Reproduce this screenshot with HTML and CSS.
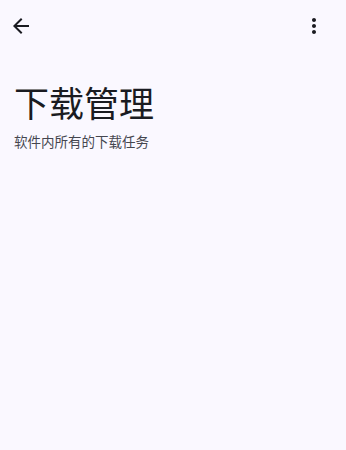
FILE: index.html
```html
<!DOCTYPE html>
<html lang="zh-CN">
<head>
    <meta charset="UTF-8">
    <meta name="viewport" content="width=device-width, initial-scale=1.0">
    <title>下载管理</title>
    <link rel="stylesheet" href="styles.css">
</head>
<body>
    <div class="page">
        <!-- 顶部栏 -->
        <div class="topbar">
            <span class="iconbtn">
                <svg viewBox="0 0 24 24" width="24" height="24"><path d="M20 11H7.83l5.59-5.59L12 4l-8 8 8 8 1.41-1.41L7.83 13H20v-2z"/></svg>
            </span>
            <span class="iconbtn">
                <svg viewBox="0 0 24 24" width="24" height="24"><path d="M12 8c1.1 0 2-.9 2-2s-.9-2-2-2-2 .9-2 2 .9 2 2 2zm0 2c-1.1 0-2 .9-2 2s.9 2 2 2 2-.9 2-2-.9-2-2-2zm0 6c-1.1 0-2 .9-2 2s.9 2 2 2 2-.9 2-2-.9-2-2-2z"/></svg>
            </span>
        </div>
        <!-- 标题 -->
        <div class="header">
            <h1 class="title">下载管理</h1>
            <p class="subtitle">软件内所有的下载任务</p>
        </div>
    </div>
</body>
</html>
```

FILE: styles.css
```css
* {
    margin: 0;
    padding: 0;
}
html, body {
    height: 100%;
}
body {
    background-color: #faf8ff;
    color: #1a1b21;
    font-family: Roboto, "Noto Sans CJK SC", sans-serif;
}
.page {
    height: 100%;
}
.topbar {
    height: 52px;
    padding: 0 20px 0 9px;
    display: flex;
    align-items: center;
    justify-content: space-between;
}
.iconbtn {
    width: 24px;
    height: 24px;
    display: flex;
}
.iconbtn svg {
    fill: #1a1b21;
}
.header {
    padding: 32px 14px 0;
}
.title {
    font-size: 35px;
    font-weight: 400;
    line-height: 44px;
}
.subtitle {
    margin-top: 4px;
    font-size: 13.5px;
    line-height: 20px;
    color: #45464f;
}
```
